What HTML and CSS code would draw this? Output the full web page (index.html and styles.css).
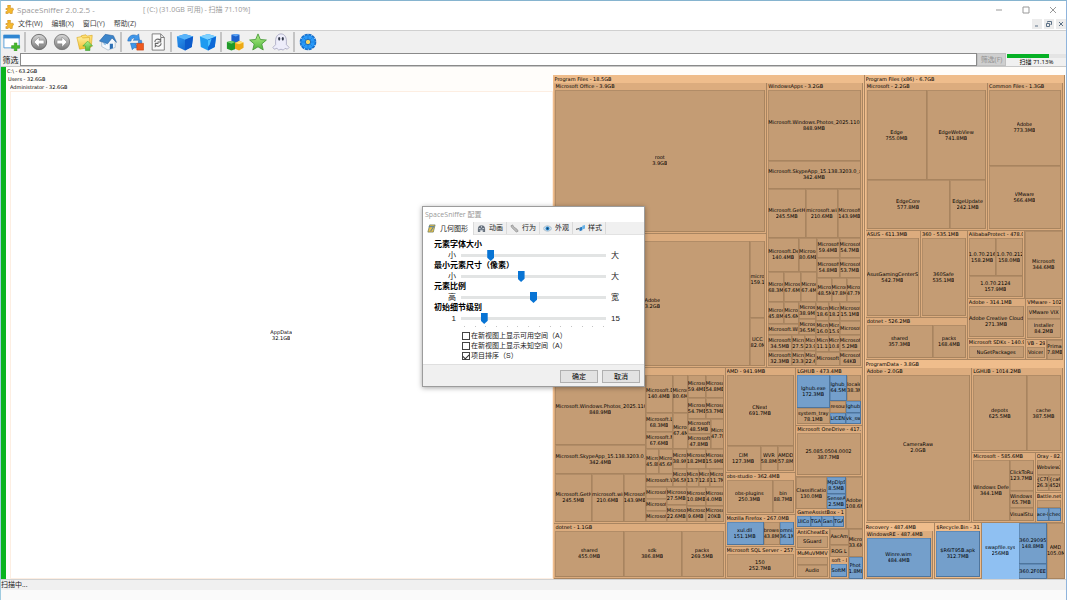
FILE: index.html
```html
<!DOCTYPE html>
<html lang="zh-CN">
<head>
<meta charset="utf-8">
<title>SpaceSniffer 2.0.2.5</title>
<link rel="stylesheet" href="styles.css">
</head>
<body>
<svg class="defs" width="0" height="0" aria-hidden="true">
  <defs>
    <linearGradient id="gGrey" x1="0" y1="0" x2="0" y2="1"><stop offset="0" stop-color="#d8d8d8"/><stop offset="1" stop-color="#777"/></linearGradient>
    <linearGradient id="gBlue" x1="0" y1="0" x2="1" y2="1"><stop offset="0" stop-color="#2f9bf2"/><stop offset="1" stop-color="#0b58c4"/></linearGradient>
    <linearGradient id="gYellow" x1="0" y1="0" x2="0" y2="1"><stop offset="0" stop-color="#fff0a0"/><stop offset="1" stop-color="#f2bf2e"/></linearGradient>
    <linearGradient id="gGreen" x1="0" y1="0" x2="0" y2="1"><stop offset="0" stop-color="#b4f08a"/><stop offset="1" stop-color="#4fb53a"/></linearGradient>
    <symbol id="puzzle" viewBox="0 0 10 10"><path d="M3 2a1.600 1.600 0 1 1 3 0l-.3 1.600L8 3.500a1.300 1.300 0 1 1 .3 2.600L8 9.500H5.600a1.100 1.100 0 1 0-2.200 0H1V7.300a1.200 1.200 0 1 0 0-2.200V4l2.400-.3z" fill="#f5b92c" stroke="#c98412" stroke-width=".6"/></symbol>
  </defs>
</svg>

<div class="window">
  <header class="titlebar">
    <svg class="app-icon"><use href="#puzzle"/></svg>
    <span class="title-name">SpaceSniffer 2.0.2.5 -</span>
    <span>[ (C:) (31.0GB 可用) - 扫描 71.10%]</span>
    <div class="caption-buttons">
      <button aria-label="最小化"><svg viewBox="0 0 8 8"><path d="M1 4h6"/></svg></button>
      <button aria-label="最大化"><svg viewBox="0 0 8 8"><path d="M1 1h6v6H1z"/></svg></button>
      <button aria-label="关闭"><svg viewBox="0 0 8 8"><path d="M1 1l6 6M7 1L1 7"/></svg></button>
    </div>
  </header>

  <nav class="menubar">
    <svg class="app-icon"><use href="#puzzle"/></svg>
    <button>文件(W)</button>
    <button>编辑(X)</button>
    <button>窗口(Y)</button>
    <button>帮助(Z)</button>
    <div class="mdi-buttons">
      <button aria-label="最小化子窗口"><svg viewBox="0 0 8 8"><path d="M2 6h3"/></svg></button>
      <button aria-label="还原子窗口"><svg viewBox="0 0 8 8"><path d="M2.500 2.500v-1h4v3h-1M1.500 3.500h3v3h-3z"/></svg></button>
      <button aria-label="关闭子窗口"><svg viewBox="0 0 8 8"><path d="M2 2l4 4M6 2L2 6"/></svg></button>
    </div>
  </nav>

  <div class="toolbar">
    <button aria-label="新建视图"><svg viewBox="0 0 20 20"><path d="M1 2.500h17v14H1z" fill="#fff" stroke="#4d9ad8"/><path d="M.5 2h18v4H.5z" fill="#2f86d2"/><path d="M12.500 11h3v3h3v3h-3v3h-3v-3h-3v-3h3z" fill="#46b82c" stroke="#2d8c1c" stroke-width=".5"/></svg></button>
    <span class="sep"></span>
    <button aria-label="后退"><svg viewBox="0 0 20 20"><circle cx="10" cy="10" r="8.500" fill="url(#gGrey)" stroke="#666"/><path d="M10 4.500L4.500 10l5.500 5.500v-3.500h5.500V8H10z" fill="#fff" stroke="#777" stroke-width=".5"/></svg></button>
    <button aria-label="前进"><svg viewBox="0 0 20 20"><circle cx="10" cy="10" r="8.500" fill="url(#gGrey)" stroke="#777"/><path d="M10 4.500l5.500 5.500-5.500 5.500v-3.500H4.500V8H10z" fill="#fff" stroke="#777" stroke-width=".5"/></svg></button>
    <button aria-label="上级文件夹"><svg viewBox="0 0 20 20"><path d="M6 3l5-1 1 1.500 6-1-1 13H6z" fill="#ffe071" stroke="#d8a51f" stroke-width=".7"/><path d="M1 5l5-1 1.500 1.500L15 5l1 11-12 2z" fill="url(#gYellow)" stroke="#d8a51f" stroke-width=".7"/><path d="M13 9l5.500 5.500H15.500V19.500h-5V14.500H7.500z" fill="url(#gGreen)" stroke="#3c9a28" stroke-width=".6"/></svg></button>
    <button aria-label="主页"><svg viewBox="0 0 20 20"><path d="M3 9v6l7 4 8-3V9l-4-5z" fill="#f4f8fc" stroke="#8ba3b8" stroke-width=".6"/><path d="M0.500 9L7 1.500l9 1.500 3.500 7.500-5-5L9.500 12z" fill="#3d86cb" stroke="#1f5c9c" stroke-width=".6"/><path d="M12 12h3.500v5L12 18z" fill="#2d70b5"/><path d="M5 11h2.500v2.500L5 12.500z" fill="#84b8e4"/></svg></button>
    <span class="sep"></span>
    <button aria-label="刷新扫描"><svg viewBox="0 0 20 20"><path d="M2 9C2 4 7 .5 12 3l2-2 1 7H8l2-2C8 5 5.500 6.500 5.500 9z" fill="#3f97ea" stroke="#1c65b6" stroke-width=".6"/><path d="M17 8c2 4-2 9.500-8 8.500L7 18.500l-2-7h7l-2 2c2.500 0 4-2 4-5z" fill="#3f97ea" stroke="#1c65b6" stroke-width=".6"/><path d="M12 11.500h7.500v7.500H12z" fill="#ef5a20" stroke="#c43d0c" stroke-width=".6"/></svg></button>
    <button aria-label="重新载入"><svg viewBox="0 0 20 20"><path d="M3.500 1h9.500l4 4v14H3.500z" fill="#fafafa" stroke="#777"/><path d="M13 1v4h4" fill="none" stroke="#777"/><path d="M6.500 10c0-3 3.500-4 5.500-2.500l1-1v3.500h-3.500M13.500 11.500c0 3-3.500 4-5.500 2.500l-1 1V11.500h3.500" fill="none" stroke="#666" stroke-width="1.200"/></svg></button>
    <span class="sep"></span>
    <button aria-label="减少细节"><svg viewBox="0 0 20 20"><path d="M10 1l9 3-1.500 11.500L10 19.500 2 15.500 1 4z" fill="url(#gBlue)"/><path d="M10 1l9 3-9 3.500L1 4z" fill="#59b4fa"/><path d="M10 7.500l9-3.500-1.500 11.500L10 19.500z" fill="#0c5bcb"/></svg></button>
    <button aria-label="增加细节"><svg viewBox="0 0 20 20"><path d="M10 1l9 3-1.500 11.500L10 19.500 2 15.500 1 4z" fill="#1e9bf0"/><path d="M10 1l9 3-9 3.500L1 4z" fill="#7bd0ff"/><path d="M10 7.500l9-3.500-1.500 11.500L10 19.500z" fill="#0c68d6"/><path d="M10 8l4-1.500-2 6-2 3z" fill="#4cc2ff"/></svg></button>
    <span class="sep"></span>
    <button aria-label="文件类型"><svg viewBox="0 0 20 20"><path d="M6 2l5-1 4 1v7l-4 2-5-2z" fill="#1c62cc"/><path d="M6 2l5-1 4 1-4 2z" fill="#5ca5f5"/><path d="M1 10l5-1 4 1v8l-4 1.500-5-2z" fill="#219a2a"/><path d="M1 10l5-1 4 1-4 2z" fill="#72d46c"/><path d="M10 11l5-2 4.500 1.500v6l-5 3-4.500-2z" fill="#eda914"/><path d="M10 11l5-2 4.500 1.500-5 2z" fill="#ffe075"/></svg></button>
    <button aria-label="收藏"><svg viewBox="0 0 20 20"><path d="M10 1l2.600 6.200 6.700.6-5.100 4.400 1.600 6.600L10 15.300l-5.800 3.500 1.600-6.600L.7 7.800l6.700-.6z" fill="url(#gGreen)" stroke="#4b9c3b"/></svg></button>
    <button aria-label="幽灵文件"><svg viewBox="0 0 20 20"><path d="M4 9c0-5 2.500-8 6-8s6 3 6 8v4l3 3-2 2-2.500-1-2 2-2.500-1-2.500 1-2-2L2.500 18 1 16l3-3z" fill="#ededfa" stroke="#9c9cb8" stroke-width=".8"/><ellipse cx="8" cy="6.500" rx="1.200" ry="2" fill="#333a4a"/><ellipse cx="12" cy="6.500" rx="1.200" ry="2" fill="#333a4a"/></svg></button>
    <span class="sep"></span>
    <button aria-label="配置"><svg viewBox="0 0 20 20"><circle cx="10" cy="10" r="8" fill="#1d8cf0" stroke="#1670cc" stroke-width="2.500" stroke-dasharray="3.500 .7"/><circle cx="10" cy="10" r="7.500" fill="#2a9af8"/><path d="M10 3v14M3 10h14M5 5l10 10M15 5L5 15" stroke="#1878d6" stroke-width=".7"/><circle cx="10" cy="10" r="3" fill="#f7d566" stroke="#1265ba"/></svg></button>
  </div>

  <div class="filterbar">
    <label for="filter">筛选</label>
    <input id="filter" type="text">
    <button class="filter-go" disabled>筛选(F)</button>
    <div class="scan">
      <div class="scan-track"><div class="scan-fill" style="width:71.13%"></div></div>
      <span>扫描 71.13%</span>
    </div>
  </div>

  <main class="workspace">
    <div class="level-bar"></div>
    <div class="treemap" id="treemap"></div>
  </main>
  <footer class="statusbar">扫描中...</footer>
  <div class="desktop"></div>
</div>

<form class="dialog" aria-label="SpaceSniffer 配置">
  <div class="dialog-title">SpaceSniffer 配置</div>
  <div class="tabs">
    <button type="button" class="tab active"><svg viewBox="0 0 10 10"><path d="M3 1h6L7 9H1z" fill="#e9c14a" stroke="#6d7a5a" stroke-width=".8"/><path d="M2 3h5M8 2L4 8" stroke="#3b74b0"/></svg>几何图形</button>
    <button type="button" class="tab"><svg viewBox="0 0 10 10"><path d="M1 5c0-5 8-5 8 0v4H7l-2-2-2 2H1z" fill="#66707c"/><path d="M2 5h2M6 5h2M5 2v2M3 7l4 0" stroke="#cfd6de"/></svg>动画</button>
    <button type="button" class="tab"><svg viewBox="0 0 10 10"><path d="M1 2l2-1 1 2 4 3 1 2-2 1-2-2-3-3z" fill="#bcbcbc" stroke="#858585" stroke-width=".7"/></svg>行为</button>
    <button type="button" class="tab"><svg viewBox="0 0 10 10"><path d="M0 5c3-4 7-4 10 0-3 4-7 4-10 0z" fill="#cfe4f4" stroke="#8299aa" stroke-width=".6"/><circle cx="5" cy="5" r="2.200" fill="#2d8cd2"/><circle cx="5" cy="5" r="1" fill="#123a5c"/></svg>外观</button>
    <button type="button" class="tab"><svg viewBox="0 0 10 10"><path d="M0 6l3-1 1 1" fill="none" stroke="#555" stroke-width="1.200"/><path d="M4 4l3-1v4L4 8z" fill="#2b7cc4"/><path d="M7 2l3-1v4L7 6z" fill="#64b1e6"/></svg>样式</button>
  </div>
  <div class="pane">
    <label class="section" for="font-size">元素字体大小</label>
    <div class="slide"><span>小</span><input id="font-size" type="range" value="19"><span>大</span></div>
    <label class="section" for="min-size">最小元素尺寸（像素）</label>
    <div class="slide"><span>小</span><input id="min-size" type="range" value="41"><span>大</span></div>
    <label class="section" for="ratio">元素比例</label>
    <div class="slide"><span>高</span><input id="ratio" type="range" value="50"><span>宽</span></div>
    <label class="section" for="detail">初始细节级别</label>
    <div class="slide"><span>1</span><input id="detail" type="range" min="1" max="15" value="3"><span>15</span></div>
    <div class="ticks"><i></i><i></i><i></i><i></i><i></i><i></i><i></i><i></i><i></i><i></i><i></i><i></i><i></i><i></i></div>
    <div class="checks">
      <label><input type="checkbox">在新视图上显示可用空间（A）</label>
      <label><input type="checkbox">在新视图上显示未知空间（A）</label>
      <label><input type="checkbox" checked>项目排序（S）</label>
    </div>
  </div>
  <div class="dialog-actions">
    <button type="button">确定</button>
    <button type="button">取消</button>
  </div>
</form>
<script src="treemap.js"></script>
</body>
</html>
```

FILE: styles.css
```css
* { box-sizing: border-box; }
body {
  margin: 0;
  background: #fff;
  color: #222;
  font: 8px/10px "Open Sans", "Noto Sans CJK SC", sans-serif;
}
button, input { font: inherit; color: inherit; margin: 0; }
button { border: 0; padding: 0; background: none; }
svg { display: block; }
.defs { position: absolute; }

.window {
  display: flex;
  flex-direction: column;
  height: 100vh;
  border-top: 1px solid #86b4cf;
  border-left: 1px solid #9fcbe0;
  border-right: 1px solid #8fb4dc;
}
.titlebar {
  display: flex;
  align-items: center;
  flex: 0 0 17px;
  padding-left: 4px;
  color: #999;
}
.app-icon { width: 9px; height: 9px; margin-right: 3px; }
.title-name { width: 126px; }
.titlebar > span + span { font-size: 7px; }
.caption-buttons { display: flex; margin-left: auto; }
.caption-buttons button { width: 27px; display: flex; justify-content: center; }
.caption-buttons svg, .mdi-buttons svg { width: 8px; height: 8px; fill: none; stroke: #999; stroke-width: 1; }

.menubar {
  display: flex;
  align-items: center;
  flex: 0 0 12px;
  padding-left: 4px;
  color: #444;
}
.menubar > button { margin-right: 9px; white-space: nowrap; font-size: 7px; }
.menubar .app-icon { margin-right: 4px; }
.mdi-buttons { display: flex; gap: 2px; margin-left: auto; }
.mdi-buttons button { width: 10px; height: 10px; background: #ececec; display: grid; place-items: center; }
.mdi-buttons svg { stroke: #5c7186; }

.toolbar {
  display: flex;
  align-items: center;
  flex: 0 0 23px;
  background: #f0f0f0;
  border-top: 1px solid #d0d0d0;
}
.toolbar button { width: 23px; height: 20px; display: grid; place-items: center; }
.toolbar button:first-child { width: 22px; }
.toolbar svg { width: 18px; height: 18px; }
.toolbar .sep { width: 2px; height: 20px; margin: 0 1px; background: #c4c4c4; }

.filterbar {
  display: flex;
  flex: 0 0 14px;
  background: #f0f0f0;
  border-bottom: 1px solid #c8c8c8;
}
.filterbar label { width: 19px; text-align: center; line-height: 13px; color: #111; }
.filterbar input { flex: 1; min-width: 0; border: 1px solid #8a8a8a; background: #fff; padding: 0 2px; }
.filter-go { width: 29px; background: #cfcfcf; color: #939393; border: 1px solid #c0c0c0; line-height: 11px; font-size: 7px; }
.scan { width: 60px; padding: 1px 0 0 1px; font-size: 6px; line-height: 8px; text-align: center; color: #000; }
.scan-track { height: 4px; background: #e4e4e4; }
.scan-fill { height: 4px; background: #06b025; }

.workspace { display: flex; flex: 1; min-height: 0; }
.level-bar { width: 5px; background: #0ab41e; }
.treemap {
  display: flex;
  flex: 1;
  min-width: 0;
  font: 5px/6px "DejaVu Sans", "Noto Sans CJK SC", sans-serif;
  color: #000;
}
.row, .col, .group, .leaf { display: flex; flex-shrink: 1; flex-basis: 0; min-width: 0; min-height: 0; overflow: hidden; }
.row { flex-direction: row; }
.col, .group, .leaf { flex-direction: column; }
.group { padding: 0 1px 1px; background: #dcac7e; border-right: 1px solid #a98561; border-bottom: 1px solid #a98561; }
.group > .head { flex: 0 0 7px; line-height: 7px; white-space: nowrap; overflow: hidden; }
.group > .body { display: flex; flex: 1; min-width: 0; min-height: 0; }
.group.top { background: #efbd8c; }
.group.top > .head, .group.root > .head, .group.pale > .head { flex-basis: 8px; line-height: 8px; }
.group.nest { padding: 0 1px; border-bottom: 0; }
.leaf {
  justify-content: center;
  align-items: center;
  background: #c49c74;
  border: 1px solid #a8845f;
  border-width: 0 1px 1px 0;
  box-shadow: inset 1px 1px #b18c67;
}
.leaf span { max-width: 100%; overflow: hidden; white-space: nowrap; flex: none; }
.leaf.file { background: #749fcb; border-color: #4e759d; box-shadow: inset 1px 1px #5f8ab7; }
.leaf.hot { background: #8fc0f2; border-color: #8fc0f2; box-shadow: none; }
.group.root { background: #fffdfa; border: 0; padding: 0 1px 0 0; }
.group.root > .head { padding-left: 1px; }
.group.pale { background: #fffdfa; border: 0; padding: 0 0 0 2px; }
.leaf.pale { background: #fff; border-color: #fdeee2; box-shadow: inset 1px 1px #fdeee2; }

.statusbar { flex: 0 0 11px; background: #f0f0f0; border-top: 1px solid #d2d2d2; line-height: 10px; font-size: 7px; color: #222; }
.desktop { flex: 0 0 10px; background: #fafafa; }

.dialog {
  position: absolute;
  left: 422px;
  top: 206px;
  width: 223px;
  background: #fff;
  border: 1px solid #9c9c9c;
  box-shadow: 0 1px 5px rgba(0, 0, 0, .35);
  font-family: "Liberation Sans", "Noto Sans CJK SC", sans-serif;
  color: #222;
}
.dialog-title { padding-left: 2px; line-height: 15px; font-size: 7px; color: #999; font-family: "Open Sans", "Noto Sans CJK SC", sans-serif; }
.tabs { display: flex; background: #f0f0f0; height: 13px; border-bottom: 1px solid #e2e2e2; font-size: 7px; }
.tab { display: flex; align-items: center; gap: 3px; padding: 0 3px; border-right: 1px solid #dadada; white-space: nowrap; }
.tab svg { width: 9px; height: 9px; }
.tab.active { background: #fff; height: 13px; padding: 0 5px 0 4px; gap: 4px; }
.pane { padding: 5px 20px 3px 11px; }
.section { display: block; font-weight: bold; line-height: 10px; color: #000; }
.slide { display: grid; grid-template-columns: 22px 145px 1fr; column-gap: 5px; align-items: center; height: 11px; }
.slide span:first-child { text-align: right; }
.slide span { line-height: 11px; white-space: nowrap; }
.slide input { appearance: none; width: 100%; height: 11px; background: linear-gradient(#e2e4e4, #e2e4e4) center / 100% 3px no-repeat; }
.slide input::-webkit-slider-thumb {
  appearance: none;
  width: 7px;
  height: 11px;
  background: #0874d4;
  clip-path: polygon(0 0, 100% 0, 100% 70%, 50% 100%, 0 70%);
}
.ticks { display: flex; justify-content: space-between; margin: 2px 20px 0 30px; height: 5px; }
.ticks i { width: 1px; height: 1px; background: #c4c4c4; }
.checks { padding-left: 28px; font-size: 7px; }
.checks label { display: flex; align-items: center; height: 10px; white-space: nowrap; }
.checks input { appearance: none; display: grid; place-items: center; width: 8px; height: 8px; border: 1px solid #444; background: #fff; margin: 0 1px 0 0; }
.checks input:checked::after { content: ""; width: 5px; height: 3px; border: solid #333; border-width: 0 0 1px 1px; transform: rotate(-45deg); }
.dialog-actions { display: flex; justify-content: flex-end; gap: 4px; padding: 5px 4px 3px; background: #f0f0f0; border-top: 1px solid #dfdfdf; }
.dialog-actions button { width: 38px; height: 13px; background: #e2e2e2; border: 1px solid #b0b0b0; line-height: 11px; font-size: 7px; color: #000; }
```

FILE: treemap.js
```js
// Node builders. The first argument is always the node's share of its parent.
const box = (cls, share, kids) => {
  const el = document.createElement('div');
  el.className = cls;
  el.style.flexGrow = share;
  el.append(...kids);
  return el;
};
const line = (t) => {
  const s = document.createElement('span');
  s.textContent = t;
  return s;
};
const R = (share, ...kids) => box('row', share, kids);
const C = (share, ...kids) => box('col', share, kids);
const L = (share, name, size, cls = '') =>
  box('leaf ' + cls, share, [name, size].filter(Boolean).map(line));
const F = (share, name, size) => L(share, name, size, 'file');
const G = (share, title, child, cls = '') => {
  const head = document.createElement('div');
  head.className = 'head';
  head.textContent = title;
  const body = document.createElement('div');
  body.className = 'body';
  body.append(child);
  return box('group ' + cls, share, [head, body]);
};

const users = G(547, 'Users - 32.6GB',
  G(1, 'Administrator - 32.6GB', L(1, 'AppData', '32.1GB', 'pale'), 'pale'), 'pale');

const windowsApps = G(94, 'WindowsApps - 3.2GB', C(1,
  L(70, 'Microsoft.Windows.Photos_2025.1103', '848.9MB'),
  L(28, 'Microsoft.SkypeApp_15.138.3203.0_x', '342.4MB'),
  R(49, L(38, 'Microsoft.GetH', '245.5MB'), L(32, 'microsoft.win', '210.6MB'), L(22, 'Microsoft', '143.9MB')),
  R(65,
    C(49,
      R(34, L(31, 'Microsoft.De', '140.4MB'), L(18, 'Microsoft', '80.6MB')),
      R(31, L(16, 'Micros', '68.3MB'), L(17, 'Micros', '67.6MB'), L(16, 'Micros', '67.4MB'))),
    C(43,
      R(20, L(22, 'Microsoft', '59.4MB'), L(21, 'Microsoft', '54.7MB')),
      R(20, L(22, 'Microsoft', '54.8MB'), L(21, 'Microsoft', '53.7MB')),
      R(25, L(14, 'Micros', '48.5MB'), L(15, 'Micros', '47.8MB'), L(14, 'Micros', '47.7MB')))),
  R(33,
    C(31, R(22, L(16, 'Micros', '45.8MB'), L(15, 'Micros', '45.6MB')), L(11, 'Microsoft.Wi')),
    C(17, L(17, 'Micros', '38.9MB'), L(16, 'Micros', '36.5MB')),
    C(44,
      R(19, L(12, 'Micro', '18.6MB'), L(11, 'Micro', '18.2MB'), L(21, 'Microsoft', '15.1MB')),
      R(14, L(12, 'Micro', '16.0MB'), L(11, 'Micro', '15.9MB'), L(21, 'Microsoft')))),
  R(31,
    C(24, L(16, 'Microsoft.', '34.5MB'), L(15, 'Microsoft.', '32.3MB')),
    C(24,
      R(16, L(13, 'Micro', '27.5MB'), L(11, 'Micro', '23.9MB')),
      R(15, L(13, 'Micro', '23.3MB'), L(11, 'Micro', '22.6MB'))),
    C(23, R(17, L(12, 'Micro', '11.1MB'), L(11, 'Micro', '10.8MB')), L(14, 'Microsoft.')),
    C(21, L(16, 'Microsoft', '5.2MB'), L(15, 'Microsoft', '64KB')))));

const packages = G(156, '', R(1,
  C(91,
    L(70, 'Microsoft.Windows.Photos_2025.1103', '848.9MB'),
    L(28, 'Microsoft.SkypeApp_15.138.3203.0_x', '342.4MB'),
    R(49, L(37, 'Microsoft.GetH', '245.5MB'), L(32, 'microsoft.win', '210.6MB'), L(22, 'Microsoft', '143.9MB'))),
  C(78,
    R(74,
      C(42,
        R(38, L(27, 'Microsoft.D', '140.4MB'), L(15, 'Micros', '80.6MB')),
        R(36, C(28, L(19, 'Microsoft.L', '68.3MB'), L(17, 'Microsoft.M', '67.6MB')), L(14, 'Micros', '67.4MB'))),
      C(36,
        R(23, L(18, 'Microsoft', '59.4MB'), L(18, 'Microsoft', '54.8MB')),
        R(21, L(18, 'Microsoft', '54.7MB'), L(18, 'Microsoft', '53.7MB')),
        R(30, C(24, L(15, 'Microsoft.', '48.5MB'), L(15, 'Microsoft.', '47.8MB')), L(12, 'Micro', '47.7MB')))),
    R(38,
      C(27, R(26, L(13, 'Micros', '45.8MB'), L(14, 'Micros', '45.6MB')), L(12, 'Microsoft.Wi')),
      C(14, L(20, 'Micros', '38.9MB'), L(18, 'Micros', '36.5MB')),
      C(37,
        R(20, L(19, 'Microsoft', '18.2MB'), L(18, 'Microsoft', '15.9MB')),
        R(18, L(12, 'Micros', '13.7MB'), L(11, 'Micros', '12.8MB'), L(14, 'Micros', '11.7MB')))),
    R(35,
      C(21, L(12, 'Microsoft'), L(12, 'Microsoft'), L(11, 'Microsoft')),
      C(20, L(18, 'Microsoft', '27.5MB'), L(17, 'Microsoft', '22.6MB')),
      C(19, L(19, 'Microsoft', '10.8MB'), L(16, 'Microsoft', '9.6MB')),
      C(18, L(19, 'Microsoft', '4.0MB'), L(16, 'Microsoft', '20KB'))))));

const vendors = C(71,
  G(107, 'AMD - 941.9MB', C(1,
    L(72, 'CNext', '691.7MB'),
    R(26, L(35, 'CIM', '127.3MB'), L(17, 'WVR', '58.8MB'), L(16, 'AMDD', '57.8MB')))),
  G(41, 'obs-studio - 362.4MB', R(1, L(47, 'obs-plugins', '250.3MB'), L(21, 'bin', '88.7MB'))),
  G(31, 'Mozilla Firefox - 267.0MB', R(1, F(38, 'xul.dll', '151.1MB'), L(16, 'browser', '43.8MB'), F(14, 'omni.ja', '36.1MB'))),
  G(31, 'Microsoft SQL Server - 257.6MB', L(1, '150', '252.7MB')));

const smallApps = C(67,
  G(57, 'LGHUB - 473.4MB', R(1,
    C(34, F(33, 'lghub.exe', '172.3MB'), L(15, 'system_tray', '78.1MB')),
    C(31,
      R(25, F(17, 'lghub_', '64.5MB'), L(14, 'locale', '38.3MB')),
      R(12, L(16, 'resour'), F(15, 'lghub')),
      R(11, F(16, 'LICENS'), F(15, 'vk_swi'))))),
  G(50, 'Microsoft OneDrive - 417.5MB', L(1, '25.085.0504.0002', '387.7MB')),
  R(52,
    C(50,
      R(33, L(31, 'Classificatio', '130.0MB'), C(19, F(17, 'MpDlpS', '8.5MB'), F(16, 'SenseA', '2.5MB'))),
      G(19, 'GameAssistBox - 12', R(1, F(14, 'UICo'), F(12, 'TGA'), F(12, 'Gan'), F(10, 'TGA')))),
    L(16, 'Adobe', '108.6MB')),
  R(51,
    C(34,
      G(21, 'AntiCheatExp', L(1, 'SGuard')),
      G(30, 'MuMuVMMV', C(1, L(8, ''), L(13, 'Audio')))),
    C(18,
      L(17, 'AacAm'),
      L(12, 'ROG L'),
      G(22, 'soft - 8', F(1, 'SoftM'))),
    C(14, L(29, 'Micro', '33.6MB'), F(22, 'Phot', '1.8MB'))));

const programFiles = G(311, 'Program Files - 18.5GB', C(1,
  R(285,
    C(216,
      G(151, 'Microsoft Office - 3.9GB', L(1, 'root', '3.9GB')),
      G(134, '', R(1,
        L(198, 'Adobe', '3.2GB'),
        C(15, L(78, 'micros', '159.1MB'), L(48, 'UCC', '82.0MB'))))),
    windowsApps),
  R(211,
    C(172,
      packages,
      G(54, 'dotnet - 1.1GB', R(1, L(69, 'shared', '455.0MB'), L(58, 'sdk', '386.8MB'), L(42, 'packs', '269.5MB')))),
    vendors,
    smallApps)), 'top nest');

const programFilesX86 = G(284, 'Program Files (x86) - 6.7GB', C(1,
  R(147,
    G(124, 'Microsoft - 2.2GB', C(1,
      R(90, L(62, 'Edge', '755.0MB'), L(60, 'EdgeWebView', '741.8MB')),
      R(49, L(86, 'EdgeCore', '577.8MB'), L(36, 'EdgeUpdate', '242.1MB')))),
    G(75, 'Common Files - 1.3GB', C(1, L(76, 'Adobe', '773.3MB'), L(63, 'VMware', '566.4MB')))),
  R(128,
    C(103,
      R(88,
        G(56, 'ASUS - 611.3MB', L(1, 'AsusGamingCenterSr', '542.7MB')),
        G(47, '360 - 535.1MB', L(1, '360Safe', '535.1MB'))),
      G(40, 'dotnet - 526.2MB', R(1, L(68, 'shared', '357.3MB'), L(33, 'packs', '168.4MB')))),
    C(96,
      R(67,
        G(57, 'AlibabaProtect - 478.0MB', C(1,
          R(39, L(27, '1.0.70.2168', '158.2MB'), L(26, '1.0.70.2124', '158.0MB')),
          L(20, '1.0.70.2124', '157.9MB'))),
        L(39, 'Microsoft', '344.6MB')),
      R(61,
        C(59,
          G(41, 'Adobe - 314.1MB', L(1, 'Adobe Creative Cloud', '271.3MB')),
          G(20, 'Microsoft SDKs - 140.9MB', L(1, 'NuGetPackages'))),
        C(37,
          G(40, 'VMware - 102.4MB', C(1, L(13, 'VMware VIX'), L(18, 'Installer', '84.2MB'))),
          R(21, G(20, 'VB - 29MB', L(1, 'Voicer')), L(17, 'Prima', '7.8MB'))))))), 'top nest');

const programData = G(162, 'ProgramData - 3.8GB', R(1,
  G(106, 'Adobe - 2.0GB', L(1, 'CameraRaw', '2.0GB')),
  C(93,
    G(84, 'LGHUB - 1014.2MB', R(1, L(56, 'depots', '625.5MB'), L(35, 'cache', '387.5MB'))),
    R(70,
      G(64, 'Microsoft - 585.6MB', R(1,
        L(37, 'Windows Defe', '344.1MB'),
        C(25, L(31, 'ClickToRu', '123.7MB'), L(17, 'Windows', '65.7MB'), L(13, 'VisualStuc')))),
      C(29,
        G(40, 'Oray - 82.1MB', C(1,
          L(14, 'Webview2'),
          R(17, L(14, '{C7F0', '26.3MB'), L(13, '{ca6b', '452KB')))),
        G(30, 'Battle.net - 36MB', C(1, L(8, ''), R(13, F(14, 'ace-b'), F(13, 'check')))))))), 'top nest');

const driveFiles = R(56,
  G(71, 'Recovery - 487.4MB', G(1, 'WindowsRE - 487.4MB', F(1, 'Winre.wim', '484.4MB')), 'top nest'),
  G(46, '$Recycle.Bin - 312.7MB', F(1, '$R6IT95B.apk', '312.7MB'), 'top'),
  L(38, 'swapfile.sys', '256MB', 'hot'),
  C(29, F(41, '360.290952', '148.8MB'), F(14, '360.2F0EE')),
  L(18, 'AMD', '105.0MB'));

document.getElementById('treemap').append(
  G(1, 'C:\\ - 63.2GB',
    R(1, users, R(513, programFiles, C(202, programFilesX86, programData, driveFiles))),
    'root'));
```
